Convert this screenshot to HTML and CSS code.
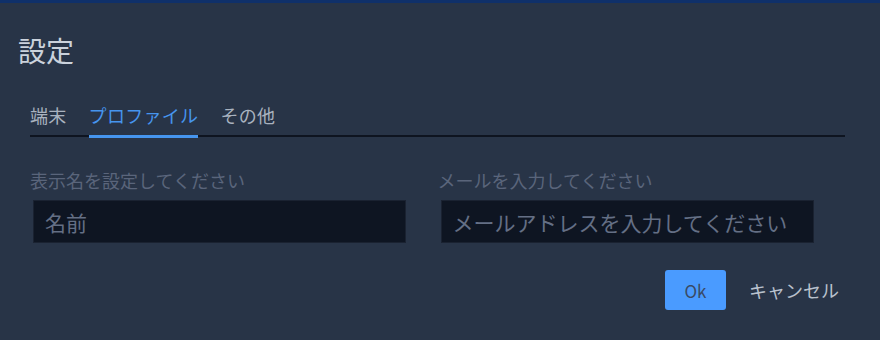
FILE: index.html
```html
<!DOCTYPE html>
<html lang="ja">
<head>
<meta charset="utf-8">
<link rel="stylesheet" href="styles.css">
</head>
<body>
<div class="topbar"></div>
<div class="dialog">
  <h1 class="title">設定</h1>
  <div class="tabs">
    <div class="tab">端末</div>
    <div class="tab active">プロファイル</div>
    <div class="tab">その他</div>
  </div>
  <div class="fields">
    <div class="field">
      <label class="label">表示名を設定してください</label>
      <input class="input" type="text" placeholder="名前">
    </div>
    <div class="field">
      <label class="label">メールを入力してください</label>
      <input class="input" type="text" placeholder="メールアドレスを入力してください">
    </div>
  </div>
  <div class="actions">
    <button class="btn btn-ok">Ok</button>
    <button class="btn btn-cancel">キャンセル</button>
  </div>
</div>
</body>
</html>
```
FILE: styles.css
```css
* { box-sizing: border-box; }
html, body {
  margin: 0;
  height: 100%;
  background: #283447;
  font-family: "Noto Sans CJK JP", "Noto Sans", sans-serif;
}
.topbar {
  height: 3px;
  background: #0f306a;
}
.dialog {
  padding: 31px 35px 0 18px;
}
.title {
  margin: 0;
  font-size: 28px;
  line-height: 32px;
  font-weight: 400;
  color: #cbd2dc;
}
.tabs {
  display: flex;
  gap: 22px;
  margin: 36px 0 0 12px;
  border-bottom: 2px solid #0e1420;
}
.tab {
  font-size: 18px;
  line-height: 26px;
  letter-spacing: 0.3px;
  color: #a9b2bf;
  padding-bottom: 7px;
  margin-bottom: -3px;
  border-bottom: 3px solid transparent;
}
.tab.active {
  color: #4695ee;
  border-bottom-color: #4695ee;
}
.fields {
  display: grid;
  grid-template-columns: 1fr 1fr;
  margin: 31px 0 0 12px;
}
.field {
  display: flex;
  flex-direction: column;
  align-items: flex-start;
}
.label {
  font-size: 18px;
  line-height: 24px;
  color: #5a657b;
}
.input {
  margin: 8px 0 0 3px;
  width: 373px;
  height: 43px;
  padding: 0 11px;
  background: #0e1522;
  border: 1px solid #1a2231;
  font-family: inherit;
  font-size: 21px;
  color: #cbd2dc;
  outline: none;
}
.input::placeholder {
  color: #646f85;
}
.actions {
  display: flex;
  justify-content: flex-end;
  align-items: center;
  gap: 23px;
  margin-top: 27px;
  padding-right: 6px;
}
.btn {
  font-family: inherit;
  border: none;
  padding: 0;
  cursor: pointer;
}
.btn-ok {
  width: 61px;
  height: 40px;
  border-radius: 3px;
  background: #4a9bff;
  color: #394a66;
  font-size: 17px;
}
.btn-cancel {
  background: transparent;
  color: #b9c1cd;
  font-size: 18px;
  line-height: 40px;
}
```
